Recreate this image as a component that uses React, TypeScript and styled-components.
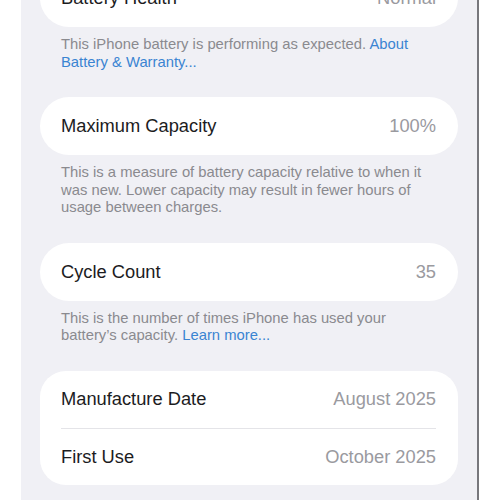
import styled, { createGlobalStyle } from "styled-components";

const Global = createGlobalStyle`
    html, body {
        margin: 0;
        padding: 0;
        background: #ffffff;
        overflow: hidden;
    }
    body {
        font-family: "Liberation Sans", Arial, sans-serif;
        -webkit-font-smoothing: antialiased;
    }
`

interface Row {
    label: string
    value: string
}

interface Section {
    rows: Row[]
    note?: string
    link?: string
}

const sections: Section[] = [
    {
        rows: [{label: 'Battery Health', value: 'Normal'}],
        note: 'This iPhone battery is performing as expected.',
        link: 'About Battery & Warranty...',
    },
    {
        rows: [{label: 'Maximum Capacity', value: '100%'}],
        note: 'This is a measure of battery capacity relative to when it was new. Lower capacity may result in fewer hours of usage between charges.',
    },
    {
        rows: [{label: 'Cycle Count', value: '35'}],
        note: "This is the number of times iPhone has used your battery\u2019s capacity.",
        link: 'Learn more...',
    },
    {
        rows: [
            {label: 'Manufacture Date', value: 'August 2025'},
            {label: 'First Use', value: 'October 2025'},
        ],
    },
]

export default function App() {
    return (
        <>
            <Global />
            <Screen>
                <Scroller>
                    {sections.map((s, i) => (
                        <Group key={i}>
                            <Card $single={s.rows.length === 1}>
                                {s.rows.map((r, j) => (
                                    <Cell key={r.label} $divider={j > 0}>
                                        <Label>{r.label}</Label>
                                        <Value>{r.value}</Value>
                                    </Cell>
                                ))}
                            </Card>
                            {s.note ? (
                                <Note>
                                    {s.note}
                                    {s.link ? <> <Link>{s.link}</Link></> : ''}
                                </Note>
                            ) : ''}
                        </Group>
                    ))}
                </Scroller>
            </Screen>
        </>
    )
}

const Screen = styled.div`
    margin-left: 21px;
    width: 456px;
    height: 500px;
    background: #f0f0f5;
    border-right: 2px solid #77777c;
    overflow: hidden;
`

const Scroller = styled.div`
    margin-top: -31px;
    padding: 0 19px;
    display: flex;
    flex-direction: column;
    gap: 26px;
`

const Group = styled.div`
    display: flex;
    flex-direction: column;
    gap: 9px;
`

const Card = styled.div<{ $single: boolean }>`
    background: #ffffff;
    border-radius: ${p => p.$single ? '29px' : '26px'};
    padding: 0 22px 0 21px;
`

const Cell = styled.div<{ $divider: boolean }>`
    display: flex;
    align-items: center;
    justify-content: space-between;
    height: ${p => p.$divider ? '56px' : '57px'};
    border-top: ${p => p.$divider ? '1px solid #e4e4e8' : 'none'};
    font-size: 18.3px;

    &:only-child {
        height: 58px;
    }
`

const Label = styled.span`
    color: #1c1c1e;
`

const Value = styled.span`
    color: #9a9a9f;
`

const Note = styled.div`
    width: 365px;
    padding-left: 21px;
    font-size: 14.8px;
    line-height: 17.5px;
    color: #8a8a8f;
`

const Link = styled.span`
    color: #3a84d2;
`
